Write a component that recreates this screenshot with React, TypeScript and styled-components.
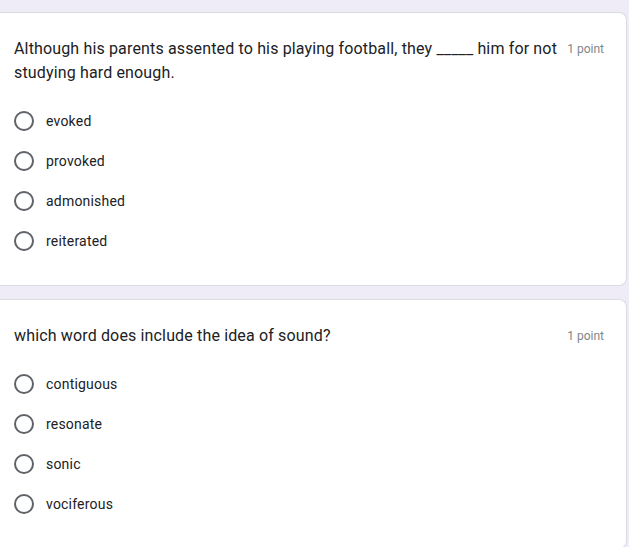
import React from "react"
import styled, { createGlobalStyle } from "styled-components"

const Global = createGlobalStyle`
html, body {
  margin:0;
  padding:0;
  background:#efecf8;
}
body {
  font-family:Roboto, "Liberation Sans", Arial, sans-serif;
}
`

const Page = styled.div`
display:flex;
flex-flow:column nowrap;
gap:13px;
padding:12px 2px 0 0;
height:547px;
box-sizing:border-box;
overflow:hidden;
`

const Card = styled.section`
background:#fff;
border:1px solid #dadce0;
border-left:none;
border-radius:0 8px 8px 0;
padding:24px 22px 24px 14px;
flex-shrink:0;
`

const Header = styled.div`
display:flex;
align-items:flex-start;
`

const Question = styled.div`
flex:1;
font-size:16px;
line-height:24px;
color:#202124;
letter-spacing:0.15px;
`

const Points = styled.span`
font-size:12px;
line-height:24px;
color:#80868b;
margin-left:6px;
white-space:nowrap;
`

const Options = styled.ul`
list-style:none;
margin:16px 0 0 0;
padding:0;
`

const Option = styled.li`
display:flex;
align-items:center;
height:40px;
font-size:14px;
color:#202124;
letter-spacing:0.2px;
`

const Radio = styled.span`
width:16px;
height:16px;
border:2px solid #5f6368;
border-radius:50%;
margin-right:12px;
flex-shrink:0;
`

interface Q {
  text:string,
  options:string[]
}

const questions:Q[] = [
  {
    text:"Although his parents assented to his playing football, they _____ him for not studying hard enough.",
    options:["evoked","provoked","admonished","reiterated"]
  },
  {
    text:"which word does include the idea of sound?",
    options:["contiguous","resonate","sonic","vociferous"]
  }
]

const App:React.FC = () => {
  return(
  <>
  <Global/>
  <Page>
    {questions.map(q=>(
    <Card key={q.text}>
      <Header>
        <Question>{q.text}</Question>
        <Points>1 point</Points>
      </Header>
      <Options>
        {q.options.map(o=>(
        <Option key={o}><Radio/>{o}</Option>
        ))}
      </Options>
    </Card>
    ))}
  </Page>
  </>
  )
}

export default App
